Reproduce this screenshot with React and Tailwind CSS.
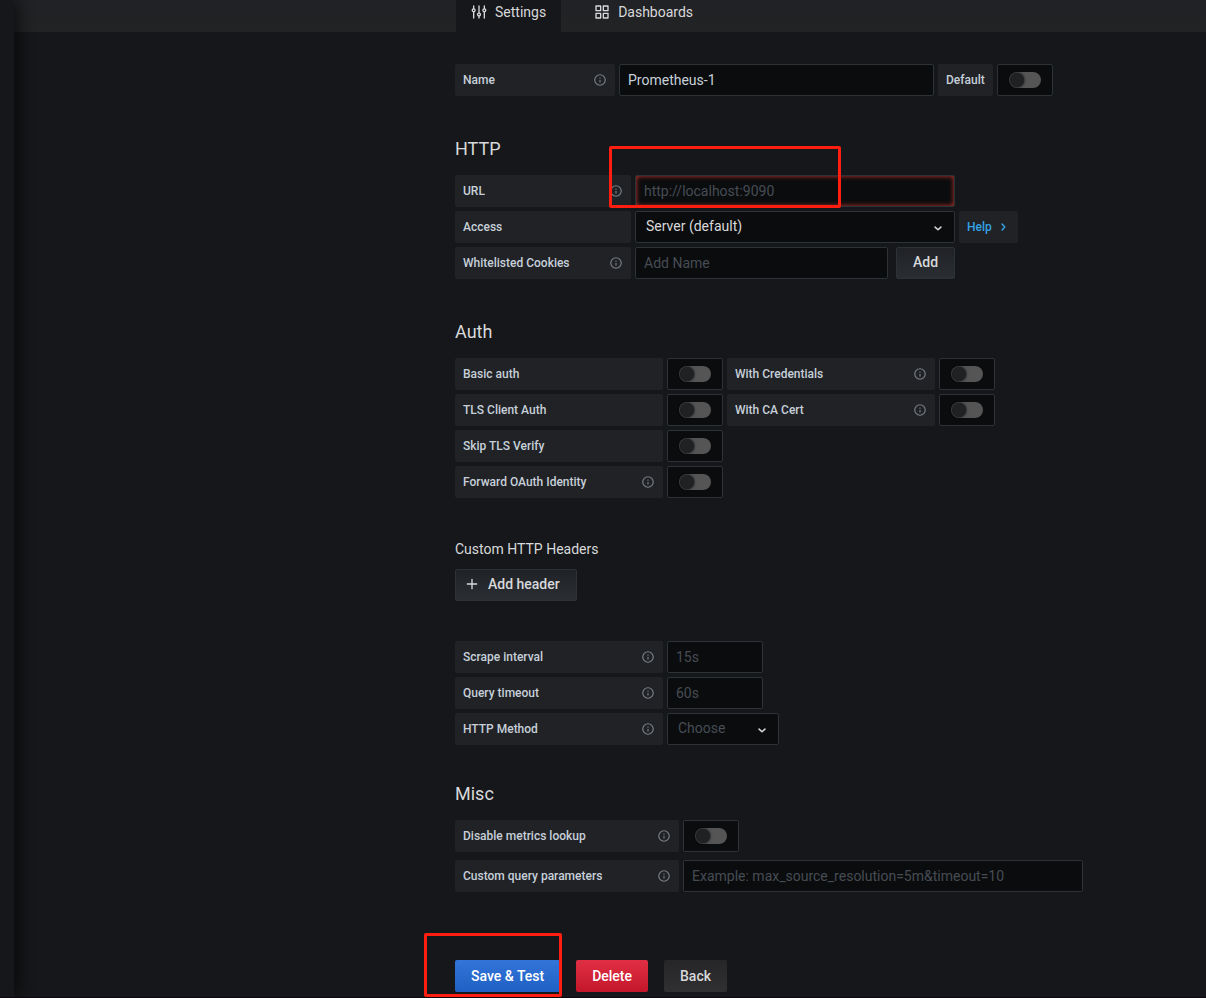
import { useState } from "react";
import clsx from "clsx";

const SlidersIcon = () => (
  <svg viewBox="0 0 24 24" className="h-4 w-4" fill="none" stroke="currentColor" strokeWidth="2" strokeLinecap="round" aria-hidden="true">
    <path d="M4 3v4M4 12v9M12 3v10M12 18v3M20 3v4M20 12v9" />
    <circle cx="4" cy="9.5" r="2.2" />
    <circle cx="12" cy="15.8" r="2.2" />
    <circle cx="20" cy="9.5" r="2.2" />
  </svg>
);

const AppsIcon = () => (
  <svg viewBox="0 0 24 24" className="h-4 w-4" fill="none" stroke="currentColor" strokeWidth="2" strokeLinejoin="round" aria-hidden="true">
    <rect x="3" y="3" width="7" height="7" />
    <rect x="14" y="3" width="7" height="7" />
    <rect x="3" y="14" width="7" height="7" />
    <rect x="14" y="14" width="7" height="7" />
  </svg>
);

const InfoIcon = () => (
  <svg viewBox="0 0 24 24" className="h-3.5 w-3.5 shrink-0 text-[#7b8087]" fill="currentColor" aria-hidden="true">
    <path d="M12,2A10,10,0,1,0,22,12,10,10,0,0,0,12,2Zm0,18a8,8,0,1,1,8-8A8,8,0,0,1,12,20Zm0-8.5a1,1,0,0,0-1,1v3a1,1,0,0,0,2,0v-3A1,1,0,0,0,12,11.5Zm0-4a1.25,1.25,0,1,0,1.25,1.25A1.25,1.25,0,0,0,12,7.5Z" />
  </svg>
);

const Chevron = ({ className }) => (
  <svg viewBox="0 0 24 24" className={clsx("h-3.5 w-3.5", className)} fill="none" stroke="currentColor" strokeWidth="2.6" strokeLinecap="round" strokeLinejoin="round" aria-hidden="true">
    <path d="M7 10.5l5 4.5 5-4.5" />
  </svg>
);

const PlusIcon = () => (
  <svg viewBox="0 0 24 24" className="h-4 w-4" fill="none" stroke="currentColor" strokeWidth="2" strokeLinecap="round" aria-hidden="true">
    <path d="M12 5v14M5 12h14" />
  </svg>
);

const Label = ({ htmlFor, info, className, children }) => (
  <label
    htmlFor={htmlFor}
    className={clsx(
      "flex h-8 shrink-0 items-center justify-between rounded-xs bg-[#202226] px-2 text-xs font-medium text-[#c7d0d9]",
      className
    )}
  >
    {children}
    {info && <InfoIcon />}
  </label>
);

const fieldClass =
  "h-8 rounded-xs border border-[#2c3235] bg-[#0b0c0e] px-2 text-sm text-[#c7d0d9] outline-none placeholder:text-[#464c54]";

const TextInput = ({ className, ...props }) => (
  <input type="text" className={clsx(fieldClass, className)} {...props} />
);

const Switch = ({ id }) => {
  const [checked, setChecked] = useState(false);

  return (
    <label
      htmlFor={id}
      className="relative flex h-8 w-14 shrink-0 cursor-pointer items-center justify-center rounded-xs border border-[#2c3235] bg-[#0b0c0e]"
    >
      <input
        id={id}
        type="checkbox"
        checked={checked}
        onChange={(e) => setChecked(e.target.checked)}
        className="peer sr-only"
      />
      <span className="flex h-4 w-8 items-center rounded-full bg-[#555556] px-px peer-checked:justify-end peer-checked:bg-blue-600">
        <span className="h-3.5 w-3.5 rounded-full bg-[#202123] shadow-[0_0_3px_#000]" />
      </span>
    </label>
  );
};

const SwitchField = ({ id, label, info, className }) => (
  <div className="flex gap-1">
    <Label htmlFor={id} info={info} className={className}>{label}</Label>
    <Switch id={id} />
  </div>
);

const Select = ({ id, options, placeholder, className }) => {
  const [value, setValue] = useState(placeholder ? "" : options[0]);

  return (
    <div className={clsx("relative", className)}>
      <select
        id={id}
        value={value}
        onChange={(e) => setValue(e.target.value)}
        className={clsx(
          "h-8 w-full appearance-none rounded-xs border border-[#2c3235] bg-[#0b0c0e] pr-7 pb-0.5 pl-2.5 text-sm outline-none",
          value ? "text-[#d8d9da]" : "text-[#464c54]"
        )}
      >
        {placeholder && <option value="">{placeholder}</option>}
        {options.map((option) => (
          <option key={option} value={option}>{option}</option>
        ))}
      </select>
      <Chevron className="pointer-events-none absolute top-2.5 right-2.5 text-[#d8d9da]" />
    </div>
  );
};

const Heading = ({ children }) => (
  <h3 className="mb-[13px] text-lg leading-[26px] text-[#d8d9da]">{children}</h3>
);

const grayButton =
  "flex h-8 items-center rounded-xs border border-[#2c3235] bg-linear-to-b from-[#202226] to-[#2a2e33] pb-0.5 text-sm font-medium text-[#d8d9da]";

// Outline drawn over the field or button that needs attention
const Marker = ({ className }) => (
  <span className={clsx("pointer-events-none absolute z-10 rounded-xs border-3 border-[#ff1e10]", className)} />
);

export default function App() {
  const [name, setName] = useState("Prometheus-1");

  return (
    <div className="flex min-h-screen overflow-hidden border-b border-[#0f0610] bg-[#16171a] font-[Roboto,sans-serif] text-sm text-[#d8d9da]">
      <aside className="z-10 w-3.5 shrink-0 bg-[#16171a] shadow-[0_0_20px_#000]" />

      <div className="min-w-0 flex-1">
        <header className="flex h-8 bg-linear-to-b from-[#202226] to-[#222324] pl-[442px]">
          <nav className="flex gap-[18px]">
            <a href="#settings" className="flex h-8 items-center gap-2 bg-[#16171a] px-[15px] pb-2">
              <SlidersIcon />
              Settings
            </a>
            <a href="#dashboards" className="flex h-8 items-center gap-2 px-[15px] pb-2">
              <AppsIcon />
              Dashboards
            </a>
          </nav>
        </header>

        <main className="pt-8 pl-[441px]">
          <form onSubmit={(e) => e.preventDefault()}>
            <div className="flex gap-1">
              <Label htmlFor="name" info className="w-40">Name</Label>
              <TextInput id="name" className="w-[315px]" value={name} onChange={(e) => setName(e.target.value)} />
              <SwitchField id="default" label="Default" />
            </div>

            <section className="mt-10">
              <Heading>HTTP</Heading>
              <div className="flex flex-col gap-1">
                <div className="flex">
                  <div className="relative flex gap-1">
                    <Label htmlFor="url" info className="w-44">URL</Label>
                    <TextInput
                      id="url"
                      type="url"
                      required
                      placeholder="http://localhost:9090"
                      className="w-80 shadow-[inset_0_0_5px_#c8372e]"
                    />
                    <Marker className="-top-[29px] -bottom-px left-[154px] w-[232px]" />
                  </div>
                </div>
                <div className="flex gap-1">
                  <Label htmlFor="access" className="w-44">Access</Label>
                  <Select id="access" options={["Server (default)", "Browser"]} className="w-80" />
                  <button type="button" className="flex h-8 items-center gap-1 rounded-xs bg-[#202226] px-2 text-xs font-medium text-[#33a2e5]">
                    Help
                    <Chevron className="-rotate-90" />
                  </button>
                </div>
                <div className="flex gap-1">
                  <Label htmlFor="cookies" info className="w-44">Whitelisted Cookies</Label>
                  <TextInput id="cookies" placeholder="Add Name" className="w-[253px]" />
                  <button type="button" className={clsx(grayButton, "ml-1 px-4")}>Add</button>
                </div>
              </div>
            </section>

            <section className="mt-10">
              <Heading>Auth</Heading>
              <div className="flex flex-col gap-1">
                <div className="flex gap-1">
                  <SwitchField id="basic-auth" label="Basic auth" className="w-52" />
                  <SwitchField id="with-credentials" label="With Credentials" info className="w-52" />
                </div>
                <div className="flex gap-1">
                  <SwitchField id="tls-client-auth" label="TLS Client Auth" className="w-52" />
                  <SwitchField id="ca-cert" label="With CA Cert" info className="w-52" />
                </div>
                <SwitchField id="skip-tls" label="Skip TLS Verify" className="w-52" />
                <SwitchField id="oauth" label="Forward OAuth Identity" info className="w-52" />
              </div>
            </section>

            <section className="mt-[39px]">
              <h4 className="mb-2 text-sm leading-6">Custom HTTP Headers</h4>
              <button type="button" className={clsx(grayButton, "gap-2 pr-4 pl-2")}>
                <PlusIcon />
                Add header
              </button>
            </section>

            <section className="mt-10 flex flex-col gap-1">
              <div className="flex gap-1">
                <Label htmlFor="scrape" info className="w-52">Scrape interval</Label>
                <TextInput id="scrape" placeholder="15s" className="w-24" />
              </div>
              <div className="flex gap-1">
                <Label htmlFor="timeout" info className="w-52">Query timeout</Label>
                <TextInput id="timeout" placeholder="60s" className="w-24" />
              </div>
              <div className="flex gap-1">
                <Label htmlFor="method" info className="w-52">HTTP Method</Label>
                <Select id="method" placeholder="Choose" options={["GET", "POST"]} className="w-28" />
              </div>
            </section>

            <section className="mt-9">
              <Heading>Misc</Heading>
              <div className="flex flex-col gap-2">
                <SwitchField id="metrics-lookup" label="Disable metrics lookup" info className="w-56" />
                <div className="flex gap-1">
                  <Label htmlFor="query-params" info className="w-56">Custom query parameters</Label>
                  <TextInput
                    id="query-params"
                    placeholder="Example: max_source_resolution=5m&timeout=10"
                    className="w-[400px]"
                  />
                </div>
              </div>
            </section>

            <div className="mt-17 flex gap-4">
              <div className="relative">
                <button type="submit" className="h-8 rounded-xs bg-linear-to-b from-[#3274d9] to-[#1f60c4] px-4 font-medium text-white">
                  Save &amp; Test
                </button>
                <Marker className="-top-[27px] -right-0.5 h-16 w-[138px]" />
              </div>
              <button type="button" className="h-8 rounded-xs bg-linear-to-b from-[#e02f44] to-[#c4162a] px-4 font-medium text-white">
                Delete
              </button>
              <button type="button" className="h-8 rounded-xs bg-linear-to-b from-[#262628] to-[#303032] px-4 font-medium">
                Back
              </button>
            </div>
          </form>
        </main>
      </div>
    </div>
  );
}
